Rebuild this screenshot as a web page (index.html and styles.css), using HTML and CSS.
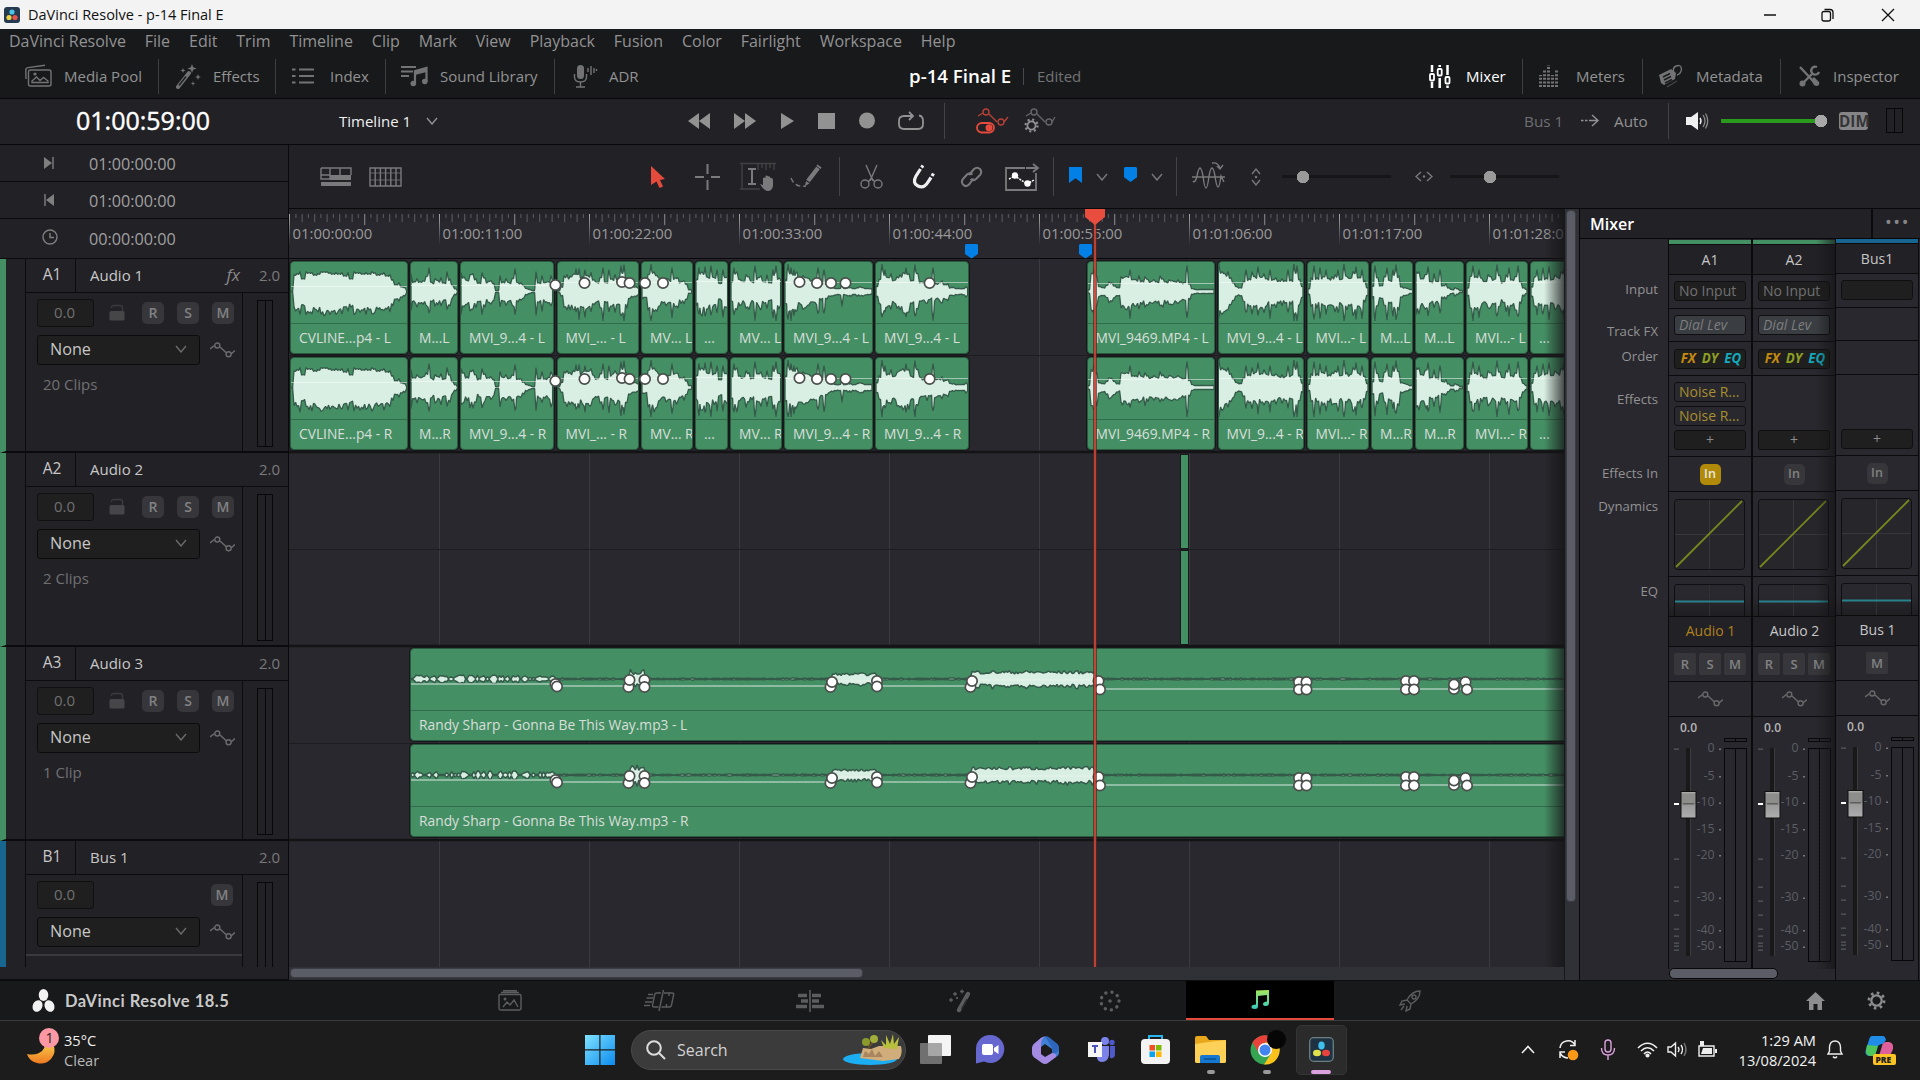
FILE: index.html
```html
<!DOCTYPE html>
<html lang="en">
<head>
    <meta charset="UTF-8">
    <meta name="viewport" content="width=device-width, initial-scale=1.0">
    <title>DaVinci Resolve - p-14 Final E</title>
    <link rel="stylesheet" href="styles.css">
</head>
<body>
    <svg class="defs">
        <symbol id="curve" viewBox="0 0 25 16">
            <path d="M0 7L4.500 3.500M10 5L16.500 11M21 12L25 8.500" class="line"/>
            <circle cx="7.300" cy="3.500" r="2.500" class="line"/><circle cx="18.600" cy="12.300" r="2.500" class="line"/>
        </symbol>
        <symbol id="chev" viewBox="0 0 12 8"><path d="M1 1L6 7L11 1" class="line"/></symbol>
        <symbol id="lock" viewBox="0 0 16 17"><path d="M2.500 4V3.500Q2.500 1.500 5 1.500H11Q13.500 1.500 13.500 4V7" class="line" opacity=".7"/><rect x="0.500" y="7" width="15" height="9.500" rx="1.500" fill="currentColor"/></symbol>
        <symbol id="gear" viewBox="0 0 22 22"><circle cx="11" cy="11" r="6" fill="none" stroke="currentColor" stroke-width="2.600"/><circle cx="11" cy="11" r="8.800" fill="none" stroke="currentColor" stroke-width="3.200" stroke-dasharray="3 3.910"/></symbol>
    </svg>

    <!-- window title -->
    <div class="titlebar">
        <svg width="16" height="16" viewBox="0 0 16 16"><rect width="16" height="16" rx="3" fill="#253a4e"/><circle cx="8" cy="5" r="2.600" fill="#48c3ea"/><circle cx="5" cy="10.500" r="2.600" fill="#e8d245"/><circle cx="11" cy="10.500" r="2.600" fill="#e8504b"/></svg>
        <span>DaVinci Resolve - p-14 Final E</span>
        <svg class="win-btns" width="132" height="16" viewBox="0 0 132 16" fill="none" stroke="#111" stroke-width="1.300"><path d="M1 8H13M119 2L131 14M131 2L119 14"/><rect x="59" y="4.500" width="8.500" height="9.500" rx="2"/><path d="M61.500 2.500H67Q70 2.500 70 5.500V12"/></svg>
    </div>

    <div class="menubar">
        <span>DaVinci Resolve</span><span>File</span><span>Edit</span><span>Trim</span><span>Timeline</span><span>Clip</span><span>Mark</span><span>View</span><span>Playback</span><span>Fusion</span><span>Color</span><span>Fairlight</span><span>Workspace</span><span>Help</span>
    </div>

    <div class="panelbar">
        <div class="pbtn media"><svg width="27" height="24" viewBox="0 0 27 24"><path d="M1 15L0.800 6Q0.700 4 3 3.600L20 1.200M5.500 6H24Q26 6 26 8V20Q26 22 24 22H5.500Q3.500 22 3.500 20V8Q3.500 6 5.500 6ZM7 18.500V17L11.500 13L15 16.500L18.500 13.500L23 17V18.500Z" class="line"/><circle cx="10" cy="10" r="1.600" fill="currentColor"/></svg>Media Pool</div>
        <div class="pbtn effects"><svg width="25" height="25" viewBox="0 0 25 25"><path d="M2 23L13 9" stroke="currentColor" stroke-width="4" stroke-linecap="round"/><path d="M3 21.500L10 12.500" stroke="#222" stroke-width="1.500"/><path d="M16 0L17.200 3.300L20.500 4.500L17.200 5.700L16 9L14.800 5.700L11.500 4.500L14.800 3.300ZM22 10L22.800 12.200L25 13L22.800 13.800L22 16L21.200 13.800L19 13L21.200 12.200ZM7 4L7.700 5.800L9.500 6.500L7.700 7.200L7 9L6.300 7.200L4.500 6.500L6.300 5.800ZM17 17L17.600 18.900L19.500 19.500L17.600 20.100L17 22L16.400 20.100L14.500 19.500L16.400 18.900Z" fill="currentColor"/></svg>Effects</div>
        <div class="pbtn index"><svg width="22" height="18" viewBox="0 0 22 18"><path d="M0 2.500H3.500M0 9H3.500M0 15.500H3.500M7 2.500H22M7 9H22M7 15.500H22" stroke="currentColor" stroke-width="2.200"/></svg>Index</div>
        <div class="pbtn sound"><svg width="27" height="22" viewBox="0 0 27 22"><path d="M0 2H15M0 6.500H12M0 11H8" stroke="currentColor" stroke-width="2"/><path d="M14 18V6L25.500 3V16" fill="none" stroke="currentColor" stroke-width="2.200"/><path d="M14 6L25.500 3V7L14 10Z" fill="currentColor"/><circle cx="12.300" cy="18.500" r="2.800" fill="currentColor"/><circle cx="23.800" cy="16.500" r="2.800" fill="currentColor"/></svg>Sound Library</div>
        <div class="pbtn adr"><svg width="24" height="23" viewBox="0 0 24 23"><rect x="4" y="0" width="7" height="14" rx="3.500" fill="currentColor"/><path d="M1.500 9V12Q1.500 17 7.500 17Q13.500 17 13.500 12V9M7.500 17V22M3 22H12M15 3V7M18 1V10M21 3V8M23.500 4V6" class="line"/></svg>ADR</div>
        <div class="project"><b>p-14 Final E</b><i></i><span>Edited</span></div>
        <div class="pbtn mixer on"><svg width="22" height="23" viewBox="0 0 22 23"><g fill="none" stroke="currentColor" stroke-width="1.800"><rect x="1" y="9" width="4" height="6.500" rx="1"/><rect x="8.700" y="4" width="4" height="6.500" rx="1"/><rect x="16.500" y="12" width="4" height="6.500" rx="1"/></g><path d="M3 0V7M3 17V23M10.700 0V2M10.700 13V23M18.500 0V10M18.500 20.500V23" stroke="currentColor" stroke-width="2.500"/></svg>Mixer</div>
        <div class="pbtn meters"><svg width="20" height="22" viewBox="0 0 20 22"><path d="M1.500 22V10M5.500 22V4M9.500 22V0M13.500 22V10M17.500 22V4" stroke="currentColor" stroke-width="3" stroke-dasharray="2 1.600"/></svg>Meters</div>
        <div class="pbtn metadata"><svg width="24" height="24" viewBox="0 0 24 24"><path d="M1 11L13 5L18 9L17 15L6 21L3 19Z" fill="currentColor"/><path d="M5 13L12 9.500M6 16L13 12.500M7 19L14 15.500" stroke="#1b1c1d" stroke-width="1.500"/><path d="M16 9Q14 4 18 2Q23 0 23.500 5Q23 10 19 11" class="line"/><path d="M9 23L19 17" class="line" opacity=".5"/></svg>Metadata</div>
        <div class="pbtn inspector"><svg width="21" height="22" viewBox="0 0 21 22"><path d="M1 2L15 17M3 19L14 8" stroke="currentColor" stroke-width="2.400"/><path d="M12 15L15 12L20 17Q21 20 18 21Q16 21 15 20Z" fill="currentColor"/><circle cx="3.500" cy="18.500" r="3" fill="currentColor"/><path d="M18 2A4 4 0 1 0 20 7" fill="none" stroke="currentColor" stroke-width="2.400"/></svg>Inspector</div>
    </div>

    <div class="transport">
        <span class="timecode">01:00:59:00</span>
        <span class="white">Timeline 1</span>
        <svg width="12" height="8"><use href="#chev"/></svg>
        <svg width="23" height="16" viewBox="0 0 23 16"><path d="M11 0V16L0 8ZM22 0V16L11 8Z" fill="currentColor"/></svg>
        <svg width="23" height="16" viewBox="0 0 23 16"><path d="M1 0V16L12 8ZM12 0V16L23 8Z" fill="currentColor"/></svg>
        <svg width="13" height="16" viewBox="0 0 13 16"><path d="M0 0V16L13 8Z" fill="currentColor"/></svg>
        <svg width="17" height="16"><rect width="17" height="16" fill="currentColor"/></svg>
        <svg width="17" height="17"><circle cx="8" cy="8.500" r="8" fill="currentColor"/></svg>
        <svg width="26" height="20" viewBox="0 0 26 20"><path d="M8 5H6Q1 5 1 10V13Q1 18 6 18H20Q25 18 25 13V10Q25 5 21 4.500M7 5H14M11 1L15 5L11 9" fill="none" stroke="currentColor" stroke-width="1.800"/></svg>
        <i class="sep"></i>
        <svg class="red" width="32" height="26" viewBox="0 0 32 26"><g opacity=".75"><path d="M2 8L7 5M13 6L21 14M28 14L32 9" class="line"/><circle cx="10" cy="4" r="3" class="line"/><circle cx="25" cy="14" r="3" class="line"/></g><rect x="1" y="15" width="17" height="9.500" rx="4.700" fill="none" stroke="currentColor" stroke-width="1.800"/><circle cx="13" cy="19.700" r="3.500" fill="currentColor"/></svg>
        <svg width="32" height="26" viewBox="0 0 32 26"><g opacity=".6"><path d="M2 8L7 5M13 6L21 14M28 14L31 9" class="line"/><circle cx="10" cy="4" r="3" class="line"/><circle cx="25" cy="14" r="3" class="line"/></g><svg x="0" y="10" width="15" height="15"><use href="#gear"/></svg></svg>
        <span class="dim-text">Bus 1</span>
        <svg width="18" height="13" viewBox="0 0 18 13"><path d="M0 6.500H2.500M4 6.500H6.500M8 6.500H16M11 1L17 6.500L11 12" class="line"/></svg>
        <span>Auto</span>
        <i class="sep"></i>
        <svg class="white" width="23" height="18" viewBox="0 0 23 18"><path d="M0 5H5L12 0V18L5 13H0Z" fill="currentColor"/><path d="M14 6Q16 9 14 12" class="line"/><path d="M17 3Q21 9 17 15M19.500 1.500Q24 9 19.500 16.500" stroke="#8a8a8a" fill="none" stroke-width="1.300"/></svg>
        <div class="volume"></div>
        <span class="dim">DIM</span>
        <i class="mini-meter"></i>
    </div>

    <div class="main">
        <div class="left">
            <div class="tc"><svg width="10" height="12" viewBox="0 0 10 12"><path d="M0 0L8 6L0 12Z" fill="currentColor"/><path d="M9 0V12" class="line"/></svg>01:00:00:00</div>
            <div class="tc"><svg width="10" height="12" viewBox="0 0 10 12"><path d="M10 0L2 6L10 12Z" fill="currentColor"/><path d="M1 0V12" class="line"/></svg>01:00:00:00</div>
            <div class="tc"><svg width="16" height="16" viewBox="0 0 16 16"><circle cx="8" cy="8" r="7" class="line"/><path d="M8 4V8.500H12" class="line"/></svg>00:00:00:00</div>
            <div class="heads" id="heads"></div>
        </div>

        <div class="right">
            <div class="tools">
                <svg width="32" height="20" viewBox="0 0 32 20"><path d="M1 1H31V8M1 1V12H10V1M20 1V8M1 8H10" class="line"/><path d="M10 8H31V13H10ZM1 15H31V19H1Z" fill="currentColor"/></svg>
                <svg width="33" height="20" viewBox="0 0 33 20"><path d="M1 1H32V19H1ZM6.200 1V19M11.400 1V19M16.600 1V19M21.800 1V19M27 1V19" class="line"/><path d="M1 6H32M1 13H32" class="line" opacity=".5"/></svg>
                <svg class="red" width="14" height="22" viewBox="0 0 14 22"><path d="M0 0L14 13L9 14L12 20.500L8.500 22L5.500 15.500L0 19Z" fill="currentColor"/></svg>
                <svg width="25" height="26" viewBox="0 0 25 26"><path d="M12.500 0V10M12.500 16V26M0 13H9M16 13H25" stroke="currentColor" stroke-width="2"/></svg>
                <svg width="36" height="30" viewBox="0 0 36 30"><g opacity=".35"><path d="M0 1.500H36M2 1V27M0 27H20M18 2V8M22 2V6M26 2V8M30 2V6M34 2V8" class="line"/></g><path d="M8 7H16M12 7V22M8 22H16" stroke="currentColor" stroke-width="2"/><path d="M20 22L23 23V16Q24.500 15 25.500 16V14Q27 13 28 14.500Q30 13.500 30.500 16Q33 15.500 33 18V24Q32 29 28 29Q24 29 20 22Z" fill="currentColor"/></svg>
                <svg width="31" height="26" viewBox="0 0 31 26"><path d="M0 14Q4 24 15 22" class="line" stroke-dasharray="5 3"/><path d="M17 17L27 4" stroke="currentColor" stroke-width="4.500"/><path d="M27.500 3.500L28.500 2" stroke="currentColor" stroke-width="5"/><path d="M14 22L15 17L18.500 19.500Z" fill="currentColor"/></svg>
                <i class="sep tall"></i>
                <svg width="23" height="26" viewBox="0 0 23 26"><path d="M6 1L13 17M17 1L10 17" class="line"/><circle cx="5" cy="20" r="4" class="line"/><circle cx="18" cy="20" r="4" class="line"/><path d="M8 18L11.500 14L15 18" class="line"/></svg>
                <svg class="white" width="23" height="24" viewBox="0 0 23 24"><path d="M8.500 4L4 11Q0 18 6 21Q12 24 16 17L19 12.500" fill="none" stroke="currentColor" stroke-width="3.200"/><path d="M9.500 2.500L11 0.500M20 11L21.500 8.500" stroke="currentColor" stroke-width="3.200"/></svg>
                <svg width="21" height="22" viewBox="0 0 21 22"><path d="M8 9L13 3Q16 0.500 19 3Q21.500 6 19 9L15 13Q12 15.500 9.500 13M12.500 12.500L8 18.500Q5 21.500 2.500 19Q-0.500 16 2 13L6 8.500Q8.500 6 11.500 8.500" fill="none" stroke="currentColor" stroke-width="2"/></svg>
                <svg width="34" height="28" viewBox="0 0 34 28"><path d="M20 5H1V27H31V10M21 5H32M28 1L33 5L28 9" fill="none" stroke="currentColor" stroke-width="1.800"/><path d="M4 16L10 13L22 21L29 17" stroke="#fff" stroke-width="1.500" stroke-dasharray="2 1" fill="none"/><circle cx="10" cy="12.500" r="3.200" fill="#fff"/><circle cx="22.500" cy="20.500" r="3.200" fill="#fff"/></svg>
                <i class="sep tall"></i>
                <svg class="mk" width="13" height="16" viewBox="0 0 14 17"><path d="M0 0H14V17L7 12L0 17Z" fill="#0280e6"/></svg>
                <svg width="12" height="8"><use href="#chev"/></svg>
                <svg class="mk" width="13" height="16" viewBox="0 0 14 17"><path d="M1 0H13L14 1V11L7 16L0 11V1Z" fill="#0280e6"/></svg>
                <svg width="12" height="8"><use href="#chev"/></svg>
                <i class="sep tall"></i>
                <svg width="34" height="30" viewBox="0 0 34 30"><path d="M0 15H33M1 19Q3 22 5 14Q8 -2 11 14Q14 38 17 14Q20 -2 23 14Q26 36 29 14L32 20M20 1Q26 0 28 6M25 4L28 7L31 3" class="line"/></svg>
                <svg width="10" height="18" viewBox="0 0 10 18"><path d="M1 6L5 1L9 6M1 12L5 17L9 12" class="line"/><circle cx="5" cy="9" r="1.200" fill="currentColor"/></svg>
                <div class="slider s1"></div>
                <svg width="18" height="11" viewBox="0 0 18 11"><path d="M6 1L1 5.500L6 10M12 1L17 5.500L12 10" class="line"/><circle cx="9" cy="5.500" r="1.200" fill="currentColor"/></svg>
                <div class="slider s2"></div>
            </div>

            <div class="work">
                <div class="timeline">
                    <div class="canvas" id="timeline">
                        <div class="ruler" id="ruler"></div>
                        <div class="rows" id="rows"></div>
                        <svg class="playhead" width="20" height="758" viewBox="0 0 20 758"><path d="M10 0V758" stroke="#5a2520" stroke-width="4" opacity=".7"/><path d="M10 0V758" stroke="#e04a3b" stroke-width="1.500"/><path d="M0 0H20V8L10 16L0 8Z" fill="#e84d3d"/></svg>
                        <div class="fade"></div>
                    </div>
                    <div class="hscroll"><i></i></div>
                </div>
                <div class="vscroll"><i></i></div>
                <div class="mix">
                    <div class="mix-head"><b>Mixer</b><span>•••</span></div>
                    <div class="mix-body">
                        <div class="labels"><span>Input</span><span>Track FX</span><span>Order</span><span>Effects</span><span>Effects In</span><span>Dynamics</span><span>EQ</span></div>
                        <div class="channels" id="channels"></div>
                    </div>
                </div>
            </div>
        </div>
    </div>

    <div class="pages">
        <svg class="brand-logo" width="23" height="24" viewBox="0 0 23 24" fill="#f2f2f2"><ellipse cx="11.500" cy="6" rx="4.800" ry="6"/><ellipse cx="5.500" cy="17" rx="4.800" ry="6" transform="rotate(25 5.500 17)"/><ellipse cx="17.500" cy="17" rx="4.800" ry="6" transform="rotate(-25 17.500 17)"/></svg>
        <b class="brand">DaVinci Resolve 18.5</b>
        <div class="page"><svg width="24" height="21" viewBox="0 0 24 21"><path d="M2 4.500H22Q23 4.500 23 6V18Q23 20 21 20H3Q1 20 1 18V6Q1 4.500 2 4.500ZM3 2.500H21M5 0.700H19M5 17L9 12L12 15L16 10L20 17" class="line"/><circle cx="7" cy="9" r="1.500" fill="currentColor"/></svg></div>
        <div class="page"><svg width="31" height="21" viewBox="0 0 31 21"><path d="M17 3H12.500Q11 3 10.700 4.500L8.500 15Q8.300 17 10 17H14.500M20 3H28Q30 3 29.700 4.500L27.500 15Q27 17 25.500 17H17.500M19.500 0L15 21M4 4.500H9M2.500 8H9M1 12H8M0 15.500H6M25 3.500V6M22.500 14V17" class="line"/></svg></div>
        <div class="page"><svg width="28" height="22" viewBox="0 0 28 22"><path d="M2 5.500H11M5 11H12M0 16.500H11M16 5.500H25M16 11H23M16 16.500H28" stroke="currentColor" stroke-width="3.400"/><path d="M14 0V22" stroke="currentColor" stroke-width="1.600"/></svg></div>
        <div class="page"><svg width="23" height="23" viewBox="0 0 23 23"><path d="M11 21L20 5" stroke="currentColor" stroke-width="4.400" stroke-linecap="round"/><path d="M13.500 20L19 10" stroke="#2a2b2d" stroke-width="1.300"/><path d="M12 2.500H16M14 0.500V4.500M1 11H5M3 9V13M5 5H9M7 3V7M8 9H10M9 8V10" class="line"/></svg></div>
        <div class="page"><svg width="22" height="22" viewBox="0 0 22 22"><circle cx="11" cy="11" r="9" fill="none" stroke="currentColor" stroke-width="3.400" stroke-linecap="round" stroke-dasharray="0.100 6.200"/><circle cx="11" cy="11" r="1.800" fill="currentColor"/></svg></div>
        <div class="page active"><svg width="18" height="19" viewBox="0 0 18 19"><defs><linearGradient id="g-note" x1="0" y1="0" x2="0" y2="1"><stop offset="0" stop-color="#a5e85c"/><stop offset="1" stop-color="#35c9c0"/></linearGradient></defs><path d="M5 0.500L18 0V13Q18 16 15 16Q12 16 12 14Q12 12 16 11.500V5L7 6V16Q7 19 4 19Q0 19 0.500 16.500Q1 14.500 5 14.500Z" fill="url(#g-note)"/></svg></div>
        <div class="page"><svg width="22" height="22" viewBox="0 0 22 22"><path d="M21 1Q13 1 8 10L12 14Q21 9 21 1ZM8 10L3 11L1 15L6 14M12 14L11 19L7 21L8 16M5 16L2 20" class="line"/><circle cx="15" cy="7" r="2" class="line"/></svg></div>
        <svg class="home" width="19" height="18" viewBox="0 0 19 18"><path d="M9.500 0L19 9H16V18H11.500V12H7.500V18H3V9H0Z" fill="currentColor"/></svg>
        <svg width="19" height="19"><use href="#gear"/></svg>
    </div>

    <div class="taskbar">
        <svg width="34" height="36" viewBox="0 0 34 36"><defs><linearGradient id="g-moon" x1="0" y1="0" x2="0" y2="1"><stop offset="0" stop-color="#f7c84a"/><stop offset="1" stop-color="#ee7a21"/></linearGradient></defs><path d="M27 12Q31 20 25 27Q19 33 11 31Q3 29 1 22Q10 24 16 19Q19 16 19 12Z" fill="url(#g-moon)"/><circle cx="23" cy="6" r="10" fill="#fb98a4"/><text x="19.500" y="11" class="badge">1</text></svg>
        <div class="weather"><span>35°C</span><span class="sub">Clear</span></div>
        <svg width="30" height="30" viewBox="0 0 30 30"><defs><linearGradient id="g-win" x1="0" y1="0" x2="1" y2="1"><stop offset="0" stop-color="#7fe3ff"/><stop offset="1" stop-color="#0c8bef"/></linearGradient></defs><path d="M0 0H14.300V14.300H0ZM15.500 0H30V14.300H15.500ZM0 15.500H14.300V30H0ZM15.500 15.500H30V30H15.500Z" fill="url(#g-win)"/></svg>
        <div class="search">
            <svg width="20" height="20" viewBox="0 0 20 20" fill="none" stroke="#ddd" stroke-width="2"><circle cx="8" cy="8" r="6.800"/><path d="M13 13L19 19"/></svg>Search
            <svg class="scene" width="60" height="32" viewBox="0 0 60 32"><ellipse cx="27" cy="25" rx="27" ry="6" fill="#1caef2"/><path d="M17 24L20 14L28 15L36 12L58 12Q60 20 56 25L40 27Z" fill="#d2ad7c"/><path d="M20 23L22 17L26 20L29 15L32 22L36 17L40 23Z" fill="#a98560"/><path d="M26 15V8M27 12L31 7" stroke="#6b4f2b" stroke-width="1.600"/><circle cx="23" cy="8" r="4" fill="#8a9a2c"/><circle cx="31" cy="5" r="4" fill="#a3ae3a"/><path d="M41 14L38 6L43 11V1L47 10L50 0L51 10L56 3L54 15Z" fill="#b8bf3c"/></svg>
        </div>
        <svg width="31" height="29" viewBox="0 0 31 29"><rect x="8" y="0" width="23" height="21" rx="1" fill="#f4f4f4"/><rect x="0" y="8" width="22" height="21" rx="1" fill="#8c8c8c" opacity=".75"/></svg>
        <svg width="28" height="29" viewBox="0 0 28 29"><path d="M14 0A14 14 0 1 1 8 26.500L0 28.500V14A14 14 0 0 1 14 0Z" fill="#6668cf"/><rect x="6" y="9" width="11" height="11" rx="2" fill="#fff"/><path d="M18 13L22.500 10V19L18 16Z" fill="#fff"/></svg>
        <svg width="27" height="28" viewBox="0 0 27 28"><path d="M9 2Q13 -1 17 2L24 7Q27 9 27 13V16Q27 20 24 21L20 23V13L13 8L9 11V20L2 21Q0 19 0 16V12Q0 9 3 7Z" fill="#3f7fd4"/><path d="M13 0Q9 3 9 9V18L13 21L20 17Q25 17 24 21L16 27Q13 29 10 27L3 22Q0 20 0 16V12Q0 9 3 7L9 2Z" fill="#a58ae4"/><path d="M13 0Q16 0 18 2L24 7Q27 9 27 13Q26 18 20 17V12Z" fill="#2f66bd"/></svg>
        <svg width="27" height="26" viewBox="0 0 27 26"><circle cx="17" cy="4" r="4" fill="#7b83eb"/><circle cx="24" cy="5.500" r="2.700" fill="#5059c9"/><path d="M9 9H21V18Q20 25 14 25Q10 25 9 21Z" fill="#7b83eb"/><path d="M22 9H27V18Q26 22 22 21Z" fill="#5059c9"/><rect x="0" y="5" width="14" height="15" fill="#f5f5f5"/><path d="M4 9H10M7 9V16" stroke="#4b53bc" stroke-width="2"/></svg>
        <svg width="29" height="31" viewBox="0 0 29 31"><path d="M8 7V2H21V7" fill="none" stroke="#2ab4ee" stroke-width="2"/><rect x="0" y="5" width="29" height="25" rx="4" fill="#f3f3f3"/><rect x="8.500" y="11" width="5.500" height="5.500" fill="#ef5022"/><rect x="15" y="11" width="5.500" height="5.500" fill="#7eb903"/><rect x="8.500" y="17.500" width="5.500" height="5.500" fill="#0aa2ec"/><rect x="15" y="17.500" width="5.500" height="5.500" fill="#fdb806"/></svg>
        <div class="app"><svg width="31" height="27" viewBox="0 0 31 27"><path d="M0 2Q0 0 2 0H11L14 4H29Q31 4 31 6V25Q31 27 29 27H2Q0 27 0 25Z" fill="#e9a81c"/><path d="M0 8L14 6L31 4V25Q31 27 29 27H2Q0 27 0 25Z" fill="#fdd158"/><path d="M5 27V21Q5 19 7 19H23Q25 19 25 21V27Z" fill="#1577cf"/><path d="M9 23H21" stroke="#0b4f92" stroke-width="1.500"/></svg><i></i></div>
        <div class="app"><svg class="chrome" width="36" height="34" viewBox="0 0 36 34"><circle cx="15" cy="19" r="14.500" fill="#35a553"/><path d="M2.500 11.500A14.500 14.500 0 0 1 27.500 11.500H15L9 22Z" fill="#e8433a"/><path d="M27.500 11.500A14.500 14.500 0 0 1 14 33.500L21.500 22L15 11.500Z" fill="#fbc21d"/><circle cx="15" cy="19" r="7" fill="#fff"/><circle cx="15" cy="19" r="5.500" fill="#4384ee"/><circle cx="26.500" cy="8.500" r="9.500" fill="#060606"/></svg><i></i></div>
        <div class="app tile"><svg width="25" height="25" viewBox="0 0 25 25"><rect x="0.700" y="0.700" width="23.600" height="23.600" rx="4" fill="#1f3243" stroke="#6b7f80" stroke-width="1.300"/><ellipse cx="12.500" cy="8.500" rx="3.200" ry="4" fill="#3fc0ec"/><ellipse cx="8" cy="16" rx="4" ry="3.300" fill="#dfe14a"/><ellipse cx="17" cy="16" rx="4" ry="3.300" fill="#e8423f"/></svg><i></i></div>
        <svg width="14" height="9" viewBox="0 0 14 9"><path d="M1 8L7 1.500L13 8" fill="none" stroke="#eee" stroke-width="1.600"/></svg>
        <svg width="21" height="22" viewBox="0 0 21 22"><path d="M2 9A8 8 0 0 1 17 6M17 1V6.500H12M2 19V13H7M2 14Q5 19 10 19" fill="none" stroke="#eee" stroke-width="1.500"/><circle cx="15" cy="16" r="5.300" fill="#fb9818"/></svg>
        <svg width="16" height="21" viewBox="0 0 16 21"><rect x="5" y="1" width="6" height="12" rx="3" fill="none" stroke="#dba1df" stroke-width="1.400"/><path d="M1.500 9Q1.500 16 8 16Q14.500 16 14.500 9M8 16V21" fill="none" stroke="#dba1df" stroke-width="1.400"/></svg>
        <svg width="21" height="16" viewBox="0 0 21 16" fill="none" stroke="#eee" stroke-width="1.600"><path d="M1 6Q10.500 -3.500 20 6M4 9Q10.500 2.500 17 9M7 12Q10.500 8 14 12"/><circle cx="10.500" cy="13.500" r="1.300" fill="#eee"/></svg>
        <svg width="21" height="17" viewBox="0 0 21 17" fill="none" stroke="#eee" stroke-width="1.400"><path d="M1 6H4L8.500 2V15L4 11H1ZM11 6Q13 8.500 11 11M14 4Q17 8.500 14 13"/><path d="M17 2Q21 8.500 17 15" stroke="#777"/></svg>
        <svg width="19" height="17" viewBox="0 0 19 17"><path d="M1 5H16V15H1Z" fill="none" stroke="#eee" stroke-width="1.400"/><path d="M5 7H14V13H3ZM17 8H19V12H17ZM2 0H6V5H2Z" fill="#eee"/></svg>
        <div class="clock"><span>1:29 AM</span><span>13/08/2024</span></div>
        <svg width="16" height="19" viewBox="0 0 16 19"><path d="M1 14H15L13.500 11V7Q13 1 8 1Q3 1 2.500 7V11ZM6 16.500Q8 19 10 16.500" fill="none" stroke="#eee" stroke-width="1.400"/></svg>
        <svg width="31" height="30" viewBox="0 0 31 30"><path d="M7 1H18Q20 1 21 5L18 9Q13 9 12 13L10 20Q9 21 4 21Q-1 20 1 14L4 5Q5 1 7 1Z" fill="#1f8ce8"/><path d="M2 10L1 16Q1 21 6 21H10L13 11Z" fill="#4fc55b"/><path d="M21 7H24Q29 8 28 14L25 21H14L17 11Q18 7 21 7Z" fill="#e0609c"/><rect x="8" y="19" width="23" height="11" rx="2" fill="#fcc324"/><text x="10.500" y="28" class="pre">PRE</text></svg>
    </div>

    <script src="script.js"></script>
</body>
</html>
```
FILE: styles.css
```css
* {
    box-sizing: border-box;
}
body {
    margin: 0;
    width: 1920px;
    height: 1080px;
    overflow: hidden;
    display: flex;
    flex-direction: column;
    font-family: "Open Sans", "Noto Sans", sans-serif;
    font-size: 15px;
    color: #929293;
    background: #18191b;
}
svg {
    display: block;
    flex: none;
    overflow: visible;
}
.defs {
    position: absolute;
    width: 0;
    height: 0;
}
.line {
    fill: none;
    stroke: currentColor;
    stroke-width: 1.4;
}
.white {
    color: #f0f0f0;
}
.red {
    color: #e54b3c;
}

/* title + menu */
.titlebar {
    height: 29px;
    background: #f3f3f3;
    color: #111;
    display: flex;
    align-items: center;
    padding: 0 19px 0 4px;
    gap: 8px;
    font-size: 14.5px;
}
.win-btns {
    margin-left: auto;
    margin-right: 6px;
}
.menubar {
    height: 25px;
    display: flex;
    align-items: center;
    gap: 18.9px;
    padding: 0 0 2px 9px;
    font-size: 16px;
}
.panelbar {
    height: 45px;
    display: flex;
    border-bottom: 1px solid #08080a;
}
.pbtn {
    display: flex;
    align-items: center;
    position: relative;
    white-space: nowrap;
}
.pbtn::after {
    content: "";
    position: absolute;
    right: 0;
    top: 5px;
    height: 35px;
    width: 1px;
    background: #3e3f41;
}
.pbtn svg {
    opacity: .75;
}
.pbtn.on {
    color: #fff;
}
.pbtn.on svg {
    opacity: 1;
}
.adr::after, .inspector::after {
    display: none;
}
.media { width: 159px; padding-left: 25px; gap: 12px; }
.effects { width: 117px; padding-left: 17px; gap: 12px; }
.index { width: 110px; padding-left: 16px; gap: 16px; }
.sound { width: 169px; padding-left: 15px; gap: 12px; }
.adr { width: 354px; padding-left: 18px; gap: 12px; }
.mixer { width: 94px; padding-left: 0; gap: 15px; }
.meters { width: 120px; padding-left: 16px; gap: 17px; }
.metadata { width: 138px; padding-left: 15px; gap: 14px; }
.inspector { padding-left: 18px; gap: 13px; }
.project {
    width: 520px;
    display: flex;
    align-items: center;
}
.project b {
    width: 114px;
    color: #fff;
    font-weight: 600;
    font-size: 18.7px;
    padding-bottom: 1px;
    white-space: nowrap;
}
.project i {
    width: 1px;
    height: 17px;
    background: #47484a;
    margin-right: 13px;
}
.project span {
    color: #727274;
}

/* transport */
.transport {
    height: 46px;
    display: grid;
    grid-template-columns: 262px 87px 262px 45px 48px 37px 41px 39px 46px 32px 48px 500px 57px 33px 54px 18px 35px 118px 47px 20px;
    align-items: center;
    padding: 0 0 2px 77px;
    background: #222126;
    border-bottom: 1px solid #09090a;
    white-space: nowrap;
}
.timecode {
    color: #fff;
    font-size: 25px;
    font-weight: 500;
    -webkit-text-stroke: .4px #fff;
    margin: -2px 0 0 -1px;
}
.sep {
    width: 1px;
    height: 36px;
    background: #444448;
}
.sep.tall {
    height: 39px;
}
.dim-text {
    color: #6f6f72;
}
.transport span:nth-of-type(n+3) {
    font-size: 15.3px;
}
.volume {
    width: 106px;
    height: 12px;
    background: radial-gradient(circle at 100px 6px, #a8a8a8 6px, transparent 6.5px), linear-gradient(#2a9a1c, #2a9a1c) 0 4px / 100px 4px no-repeat;
}
.transport .dim {
    width: 29px;
    height: 18px;
    line-height: 18px;
    border-radius: 3px;
    background: #858587;
    color: #343437;
    font-size: 13px;
    font-weight: 700;
    text-align: center;
}
.mini-meter {
    width: 17px;
    height: 25px;
    border: 1px solid #060607;
    background: linear-gradient(#060607, #060607) 7px 0 / 1px 100% no-repeat;
}

/* left side */
.main {
    height: 836px;
    display: flex;
    background: #222126;
    border-bottom: 2px solid #0d0d0f;
}
.left {
    width: 289px;
    border-right: 1px solid #0a0a0c;
    overflow: hidden;
}
.tc {
    height: 37px;
    border-bottom: 1px solid #0c0c0e;
    display: flex;
    align-items: center;
    padding: 2px 0 0 44px;
    gap: 35px;
    color: #a0a0a0;
    font-size: 16.2px;
}
.tc svg {
    color: #7f7f80;
    margin-top: -3px;
}
.tc:nth-child(3) {
    height: 40px;
    padding: 0 0 0 42px;
    gap: 31px;
}
.heads {
    height: 708px;
    overflow: hidden;
}
.head {
    height: 194px;
    display: flex;
    border-bottom: 2px solid #0b0b0d;
    border-left: 6px solid #458f64;
}
.head.bus {
    border-left-color: #186690;
    height: 200px;
}
.head-in {
    flex: 1;
    margin-left: 19px;
    border-left: 1px solid #0c0c0e;
}
.head-top {
    height: 34px;
    border-bottom: 1px solid #0c0c0e;
    display: flex;
    align-items: center;
    padding: 0 8px 2px 0;
    color: #c8c8c8;
}
.head-top .no {
    width: 50px;
    height: 33px;
    line-height: 31px;
    margin-bottom: -2px;
    border-right: 1px solid #0c0c0e;
    text-align: center;
    padding-left: 3px;
    font-size: 15.5px;
}
.head-top .nm {
    flex: 1;
    padding-left: 14px;
}
.head-top .fx {
    font-style: italic;
    color: #88888a;
    margin-right: 19px;
    font-size: 17px;
    line-height: 20px;
}
.head-top .fmt {
    color: #7a7a7c;
}
.head-body {
    height: 158px;
    display: flex;
}
.bus .head-body {
    height: 164px;
}
.head-ctl {
    width: 217px;
    border-right: 1px solid #0c0c0e;
    padding: 5px 0 0 11px;
}
.ctl-row {
    display: flex;
    align-items: center;
    height: 29px;
}
.ctl-row svg {
    color: #464649;
}
.vol {
    width: 57px;
    height: 28px;
    line-height: 24px;
    text-align: center;
    background: #1f1f1f;
    border: 1px solid #101011;
    border-radius: 3px;
    color: #707072;
    margin-right: 15px;
    padding-right: 2px;
}
.btn {
    width: 22px;
    height: 22px;
    line-height: 22px;
    border-radius: 5px;
    background: #37373b;
    color: #818183;
    text-align: center;
    font-size: 14px;
    font-weight: 600;
    margin-left: 13px;
}
.ctl-row .lock {
    margin-right: 4px;
}
.bus .btn {
    margin-left: 102px;
}
.select {
    width: 163px;
    height: 30px;
    margin-right: 10px;
    padding: 0 12px 1px 12px;
    display: flex;
    align-items: center;
    justify-content: space-between;
    background: #1f1f1f;
    border: 1px solid #0b0b0c;
    border-radius: 3px;
    color: #c6c6c6;
    font-size: 16.2px;
}
.ctl-row.second {
    margin-top: 8px;
}
.select svg, .second > svg {
    color: #6b6b6e;
}
.count {
    margin: 10px 0 0 6px;
    color: #717174;
}
.bus .count {
    margin: 8px 0 0 -11px;
    height: 2px;
    background: #3a3a3e;
}
.strip-meter {
    width: 16px;
    height: 147px;
    margin: 7px 0 0 14px;
    border: 1px solid #08080a;
    background: linear-gradient(#08080a, #08080a) 7px 0 / 1px 100% no-repeat;
}

/* tool row */
.right {
    flex: 1;
    min-width: 0;
}
.tools {
    height: 64px;
    display: grid;
    grid-template-columns: 49px 282px 44px 45px 51px 48px 21px 52px 49px 44px 48px 17px 26px 29px 26px 25px 16px 59px 31px 133px 35px 110px;
    align-items: center;
    padding-left: 31px;
    color: #7a7a7c;
    border-bottom: 1px solid #09090b;
}
.tools .mk {
    margin: -3px 0 0 -1px;
}
.slider {
    width: 109px;
    height: 12px;
}
.s1 {
    background: radial-gradient(circle at 21px 6px, #9a9a9a 6px, transparent 6.500px), linear-gradient(#161618, #161618) 0 4px / 100% 3px no-repeat;
}
.s2 {
    background: radial-gradient(circle at 40px 6px, #9a9a9a 6px, transparent 6.500px), linear-gradient(#161618, #161618) 0 4px / 100% 3px no-repeat;
}

/* timeline */
.work {
    display: flex;
    height: 771px;
}
.timeline {
    width: 1275px;
    background: #303137;
}
.canvas {
    height: 758px;
    position: relative;
    overflow: hidden;
    background: #29282e;
}
.ruler {
    height: 50px;
    background: linear-gradient(#222126, #29282e 14px);
    border-bottom: 1px solid #08080a;
    position: relative;
}
.ruler svg {
    position: absolute;
    left: 0;
    top: 0;
}
.ruler text {
    font-size: 14.9px;
    fill: #999;
}
.rows {
    position: relative;
    height: 708px;
}
.rows > svg {
    position: absolute;
    left: 0;
    top: 0;
}
.clip {
    position: absolute;
    height: 93px;
    overflow: hidden;
    background: #458f64;
    border: 1px solid #2b5a41;
    border-radius: 4px;
    box-shadow: 0 0 0 1px #17181a;
    color: #d8dfda;
    font-size: 13.8px;
}
.clip svg {
    position: absolute;
    left: -1px;
    top: -1px;
}
.clip span {
    position: absolute;
    left: 8px;
    top: 66px;
    line-height: 20px;
    white-space: nowrap;
}
.clip.bare {
    border-radius: 0;
    border: 0;
}
.playhead {
    position: absolute;
    left: 795.5px;
    top: 0;
}
.fade {
    position: absolute;
    right: 0;
    top: 0;
    width: 20px;
    height: 100%;
    background: linear-gradient(to right, rgba(20, 20, 22, 0), rgba(20, 20, 22, .75));
}
.hscroll {
    height: 13px;
    padding: 1px 0 0 1px;
}
.hscroll i {
    display: block;
    width: 573px;
    height: 10px;
    border-radius: 4px;
    background: #5a5d65;
    border: 1px solid #3b3d43;
}
.vscroll {
    width: 16px;
    background: #303137;
    border-right: 1px solid #08080a;
    border-left: 1px solid #18181b;
    padding: 1px;
}
.vscroll i {
    display: block;
    width: 10px;
    height: 692px;
    border-radius: 4px;
    background: #5a5d65;
    border: 1px solid #3b3d43;
}

/* mixer */
.mix {
    flex: 1;
    background: #29282e;
    overflow: hidden;
}
.mix-head {
    height: 30px;
    background: #222126;
    border-bottom: 1px solid #08080a;
    display: flex;
    align-items: center;
    padding-left: 10px;
    color: #fff;
    font-size: 16px;
}
.mix-head b {
    flex: 1;
    font-weight: 600;
}
.mix-head span {
    width: 49px;
    height: 29px;
    line-height: 26px;
    text-align: center;
    border-left: 2px solid #0b0b0d;
    color: #858587;
    font-size: 18px;
    letter-spacing: 1.5px;
    padding-left: 2px;
}
.mix-body {
    display: flex;
    height: 741px;
}
.labels {
    width: 88px;
    padding: 40px 10px 0 0;
    display: grid;
    grid-template-rows: 42px 25px 43px 74px 33px 85px 20px;
    align-content: start;
    text-align: right;
    line-height: 20px;
    font-size: 13.2px;
}
.channels {
    flex: 1;
    display: flex;
    background: #29282e;
}
.ch {
    width: 84px;
    flex: none;
    height: 730px;
    padding-top: 1px;
    border-left: 1px solid #0b0b0d;
    border-right: 1px solid #0b0b0d;
    position: relative;
}
.ch.bus {
    margin: -1px 0 0 -1px;
    height: 742px;
}
.ch.shade::after {
    content: "";
    position: absolute;
    right: -1px;
    top: 0;
    width: 20px;
    height: 100%;
    background: linear-gradient(to right, rgba(20, 20, 22, 0), rgba(20, 20, 22, .7));
}
.ch .bar {
    height: 5px;
    background: #458f64;
    border-bottom: 1px solid #0b0b0d;
}
.ch.bus .bar {
    background: #186690;
}
.cell {
    border-bottom: 1px solid #0b0b0d;
    padding: 6px 5px;
}
.cell.name, .cell.foot {
    height: 30px;
    padding: 0;
    line-height: 29px;
    text-align: center;
    color: #c6c6c6;
    background: #222126;
    font-size: 14px;
}
.cell.foot {
    line-height: 28px;
    padding-left: 1px;
}
.cell.foot.sel {
    color: #b0801c;
}
.c-input { height: 34px; }
.c-fx { height: 33px; }
.c-order { height: 34px; padding-top: 7px; }
.c-effects {
    height: 81px;
    display: flex;
    flex-direction: column;
    gap: 4px;
    justify-content: flex-end;
}
.c-in { height: 35px; padding-top: 7px; }
.c-dyn { height: 85px; padding-top: 7px; }
.c-eq {
    height: 40px;
    padding: 7px 5px 0;
    background: linear-gradient(#29282e 50%, #1f1f22);
}
.c-btns, .c-auto {
    height: 35px;
    display: flex;
    justify-content: center;
    align-items: center;
    gap: 3px;
    color: #68686b;
}
.cell .btn {
    margin: 0 auto;
    font-size: 13px;
    width: 21px;
}
.c-btns .btn {
    margin: 0;
    width: 22px;
    border-radius: 2px;
}
.cell .btn.lit {
    background: #b08a08;
    color: #e9e9e0;
}
.cell .btn.in {
    font-size: 12.5px;
    line-height: 20px;
    height: 21px;
}
.box {
    height: 20px;
    line-height: 17px;
    padding: 0 4px;
    border: 1px solid #0f0f10;
    border-radius: 3px;
    background: #1f1f1f;
    color: #717173;
    font-size: 14px;
    white-space: nowrap;
    overflow: hidden;
}
.box.dial {
    background: #3a3d41;
    color: #7c7e80;
    font-style: italic;
}
.box.noise {
    background: #29282e;
    color: #a68f2e;
}
.box.plus {
    text-align: center;
    color: #8b8b8d;
}
.box.order {
    display: flex;
    justify-content: center;
    gap: 6px;
    padding: 0 0 0 2px;
    font-size: 13.3px;
    font-weight: 700;
    font-style: italic;
}
.order .a { color: #c48a10; }
.order .b { color: #8d9f24; }
.order .c { color: #14a9bd; }
.ch text {
    font-size: 12.3px;
    fill: #5b5e65;
    text-anchor: end;
}
.ch text.db {
    font-size: 12px;
    font-weight: 600;
    fill: #b5b5b5;
    text-anchor: start;
}
.mix-scroll {
    position: absolute;
    left: 0;
    top: 729px;
    width: 109px;
    height: 11px;
    border-radius: 5px;
    background: #5a5d65;
    border: 1px solid #08080a;
    z-index: 2;
}

/* page switcher */
.pages {
    height: 39px;
    display: flex;
    align-items: center;
    padding-left: 32px;
    background: #18191b;
    color: #5c5d5f;
}
.brand {
    width: 380px;
    padding-left: 10px;
    font-family: Lato, sans-serif;
    font-size: 16.5px;
    letter-spacing: .5px;
    color: #c9c9c9;
}
.page {
    width: 150px;
    height: 39px;
    display: flex;
    align-items: center;
    justify-content: center;
    padding-right: 1px;
}
.page.active {
    width: 148px;
    margin: 0 1px;
    background: #000;
    border-bottom: 2px solid #e54b3c;
}
.home {
    margin-left: auto;
    margin-right: 42px;
    color: #8d8d8f;
}
.home + svg {
    margin-right: 34px;
    color: #8d8d8f;
}

/* taskbar */
.taskbar {
    height: 60px;
    display: grid;
    grid-template-columns: 38px 521px 46px 289px 56px 56px 56px 53px 54px 56px 45px 225px 37px 42px 37px 30px 31px 31px 98px 38px 40px;
    align-items: center;
    padding: 0 0 2px 26px;
    background: #1c1c1c;
    border-top: 1px solid #3c3c3c;
    color: #f2f2f2;
}
.weather, .clock {
    display: flex;
    flex-direction: column;
    line-height: 20px;
    font-size: 14.6px;
}
.weather .sub {
    color: #b9b9b9;
}
.clock {
    text-align: right;
    width: 87px;
}
.badge {
    font-size: 14px;
    fill: #222;
}
.pre {
    font-size: 8.5px;
    font-weight: 800;
    fill: #222;
}
.search {
    width: 275px;
    height: 40px;
    border-radius: 20px;
    background: #3b3b3b;
    border: 1px solid #4a4a4a;
    display: flex;
    align-items: center;
    gap: 11px;
    padding-left: 14px;
    color: #d2d2d2;
    font-size: 16px;
}
.scene {
    margin-left: auto;
    margin-right: 2px;
}
.app {
    height: 50px;
    display: flex;
    align-items: center;
    position: relative;
}
.app .chrome {
    margin: -3px 0 0 -1px;
}
.app i {
    position: absolute;
    left: 12px;
    bottom: 1px;
    width: 8px;
    height: 4px;
    border-radius: 2px;
    background: #999;
}
.app.tile {
    width: 51px;
    padding-left: 12px;
    background: #2b2b2b;
    border: 1px solid #353535;
    border-radius: 5px;
}
.app.tile i {
    left: 14px;
    bottom: 0;
    width: 20px;
    background: #dba1df;
}
```
FILE: script.js
```js
const MARK_GAP = 150; // px between labelled ruler marks
const X0 = 289;       // left edge of the timeline on screen

// small repeatable random so the waveforms are stable
let seed = 7;
function rnd() {
    seed = (seed * 16807) % 2147483647;
    return seed / 2147483647;
}

/* ---------- ruler ---------- */
const marks = ["01:00:00:00", "01:00:11:00", "01:00:22:00", "01:00:33:00", "01:00:44:00", "01:00:55:00", "01:01:06:00", "01:01:17:00", "01:01:28:00"];
let ruler = '<svg width="1276" height="50"><defs><linearGradient id="g-tick" x1="0" y1="0" x2="0" y2="1"><stop offset="0" stop-color="#aaa"/><stop offset="1" stop-color="#aaa" stop-opacity="0"/></linearGradient></defs>';
marks.forEach((m, i) => {
    const x = i * MARK_GAP;
    ruler += `<rect x="${x}" y="5" width="1" height="31" fill="url(#g-tick)"/>`;
    for (let t = 1; t < 24; t++) {
        const h = t === 12 ? 11 : t % 2 ? 4 : 8;
        ruler += `<rect x="${x + t * 6.25}" y="5" width="1.300" height="${h}" fill="${t === 12 ? "#77777b" : "#515156"}"/>`;
    }
    ruler += `<text x="${x + 3.5}" y="29.5">${m}</text>`;
});
[676, 790].forEach(x => {
    ruler += `<path transform="translate(${x} 35)" d="M1 0H12L13 1V10L6.500 14.500L0 10V1Z" fill="#0280e6"/>`;
});
document.getElementById("ruler").innerHTML = ruler + "</svg>";

/* ---------- clips ---------- */
// x, right edge, name, gain line offset, peak heights every 3px
const clips = [
    [290, 408, "CVLINE...p4 -", 26, [0,17,18,20,13,20,19,19,17,18,20,20,20,19,18,19,18,19,16,19,13,20,19,19,18,19,18,20,19,17,18,19,16,17,12,7,9,5,4,1]],
    [410, 458, "M...", 25, [18,10,13,10,11,15,24,9,13,11,14,9,20,13,6,3,0]],
    [460, 554, "MVI_9...4 -", 25, [19,15,11,17,18,13,9,19,14,10,11,8,1,16,10,13,9,13,23,9,9,6,3,2,1,20,9,16,9,10,16,12]],
    [556.5, 639, "MVI_... -", 22, [1,5,16,17,15,17,23,23,15,22,16,19,12,9,14,24,9,22,13,17,13,26,27,14,6,5,5,4]],
    [641, 693, "MV...", 22, [6,6,17,28,20,16,13,10,13,12,24,14,14,10,11,7,2]],
    [695, 728, "...", 21, [12,24,20,25,14,26,14,22,8,22,14]],
    [730, 782, "MV...", 21, [10,24,20,12,10,17,15,10,26,14,16,10,17,9,22,26,14]],
    [784, 873, "MVI_9...4 -", 22, [12,28,24,22,20,13,16,14,13,11,12,24,8,22,8,5,4,3,3,13,3,4,4,3,4,5,4,3,3,3]],
    [875, 969, "MVI_9...4 -", 22, [5,12,28,22,14,18,11,15,17,19,24,18,11,27,18,10,9,12,7,24,8,9,11,7,8,4,4,3,3,3,5,3]],
    [1086.5, 1215, "MVI_9469.MP4 -", 23, [2,18,24,15,5,4,6,10,9,6,4,15,14,15,22,12,12,16,11,15,12,10,12,10,16,13,10,12,11,10,12,10,9,26,8,3,2,2,2,2,2,2,2]],
    [1217.5, 1304, "MVI_9...4 -", 22, [28,20,18,20,14,9,5,4,10,22,13,20,15,25,14,18,13,22,12,14,11,13,11,22,12,28,26,12,5]],
    [1306.5, 1369, "MVI...-", 22, [3,14,26,14,24,15,22,13,15,17,22,12,28,15,13,20,25,14,22,11,4]],
    [1371, 1413, "M...", 22, [6,26,14,6,15,24,11,22,27,16,5,4,3,2]],
    [1415, 1464, "M...", 22, [20,20,13,17,25,10,18,10,22,6,8,4,2,4,3,1]],
    [1466, 1528, "MVI...-", 22, [4,15,26,15,22,13,10,17,15,12,27,16,10,17,24,12,15,26,10,4,2]],
    [1530, 1580, "...", 22, [5,14,22,12,24,14,25,12,17,14,20,24,18,14,10]]
];

function wave(points, mid, line) {
    const top = [], bottom = [];
    points.forEach(([x, a]) => {
        top.push(`${x.toFixed(1)} ${(mid - Math.min(27.5, a)).toFixed(1)}`);
        const d = a < 3 ? a : a * (0.9 + rnd() * 0.35);
        bottom.unshift(`${x.toFixed(1)} ${(mid + Math.min(29.5, d)).toFixed(1)}`);
    });
    return `<path d="M${top.join("L")}L${bottom.join("L")}Z" fill="#daefe4" stroke="#345a49" stroke-width="${line}" stroke-linejoin="bevel"/>`;
}

// turns the 3px peaks into a jagged outline with thin spikes over a fuller body
function outline(peaks, width, dense) {
    const pts = [];
    peaks.forEach((a, i) => {
        const x = i * 3 + 1;
        const next = peaks[i + 1] ?? a;
        const body = Math.min(a, next) * (dense ? 0.95 : 0.82 + rnd() * 0.25);
        if (!dense && a > 20) {
            pts.push([x - 0.9, a * 0.72], [x, a], [x + 0.9, a * 0.72]);
        } else {
            pts.push([x, a]);
        }
        pts.push([x + 1.6, Math.min(body, dense ? 30 : 18)]);
    });
    return pts.filter(p => p[0] < width);
}

function clipHtml(x, right, y, name, svg) {
    return `<div class="clip" style="left:${x - X0}px;top:${y}px;width:${right - x}px"><svg width="${right - x}" height="93"><path d="M0 62.500H1400" stroke="#316b4b"/>${svg}</svg><span>${name}</span></div>`;
}

let rows = '<svg width="1276" height="708">';
for (let i = 1; i < 9; i++) rows += `<path d="M${i * MARK_GAP + 0.5} 0V708" stroke="#3a3a40"/>`;
[96.5, 290.5, 484.5].forEach(y => rows += `<path d="M0 ${y}H1276" stroke="#1d1d21"/>`);
[193, 387, 581].forEach(y => rows += `<path d="M0 ${y}H1276" stroke="#141417" stroke-width="2.500"/>`);
rows += "</svg>";

["L", "R"].forEach((side, r) => {
    clips.forEach(([x, right, name, gain, peaks], i) => {
        const gap = name === "M..." ? "" : " ";
        const label = name === "..." ? name : name + gap + side;
        const svg = wave(outline(peaks, right - x, i === 0), 30.5, 1.3) + `<path d="M0 ${gain - 0.5}H${right - x}" stroke="#fff" opacity=".5" stroke-width="1.200"/>`;
        rows += clipHtml(x, right, 2 + r * 96, label, svg);
    });
});

// the two slivers on Audio 2
[196, 292].forEach(y => rows += `<div class="clip bare" style="left:892px;top:${y}px;width:7px"></div>`);

// music bed
function musicAmp(x) {
    if (x < 555) return rnd() < 0.4 ? 0.5 : 1.5 + rnd() * 2.5;
    if (x > 630 && x < 645) return 4 + rnd() * 6;
    if (x > 832 && x < 877) return 3.5 + rnd() * 2.5;
    if (x > 972 && x < 1096) return 5 + rnd() * 3.5;
    return 0.1 + rnd() * 0.9;
}
["L", "R"].forEach((side, r) => {
    const pts = [];
    for (let x = 411; x < 1566; x += 1.7) pts.push([x - 410, musicAmp(x)]);
    const svg = wave(pts, 31, 1.5)
        + '<path d="M0 36H145L148 38H218L220 31H234L235 38H420L422 33H466L467 38H560L562 32H688L690 41H1156" fill="none" stroke="#e8f5ee" opacity=".6" stroke-width="1.500"/>';
    rows += clipHtml(410, 1580, 389 + r * 96, "Randy Sharp - Gonna Be This Way.mp3 - " + side, svg);
});

/* keyframes on the gain lines */
const keys = [[555.4, 285], [584.5, 283], [622, 282], [629.6, 283], [645, 283], [663, 283], [799.5, 282], [817, 283], [831, 283], [845.5, 283], [929.6, 283],
    [555.5, 684], [557, 686.5], [628.5, 687], [629.5, 680], [644.5, 680], [644.5, 687], [830.5, 687], [832, 682], [877, 681], [877, 686.5], [970.5, 687], [972, 681],
    [1098.5, 681], [1100, 689.5], [1299, 682], [1299, 689.5], [1306.5, 682], [1306.5, 689.5], [1406, 681], [1406, 689.5], [1414, 681], [1414, 689.5], [1454, 689], [1454, 684.5], [1465.5, 682], [1467, 689.5]];
rows += '<svg width="1276" height="708">';
keys.forEach(([x, y]) => [0, 96].forEach(d => {
    rows += `<circle cx="${x - X0}" cy="${y - 259 + d}" r="5.200" fill="#fff" stroke="#4a4f4c" stroke-width="1.700"/>`;
}));
document.getElementById("rows").innerHTML = rows + "</svg>";

/* ---------- track headers ---------- */
const tracks = [["A1", "Audio 1", "20 Clips"], ["A2", "Audio 2", "2 Clips"], ["A3", "Audio 3", "1 Clip"], ["B1", "Bus 1", ""]];
document.getElementById("heads").innerHTML = tracks.map(([no, name, count], i) => {
    const bus = no === "B1";
    return `<div class="head ${bus ? "bus" : ""}"><div class="head-in">
        <div class="head-top"><span class="no">${no}</span><span class="nm">${name}</span>${i === 0 ? '<span class="fx">fx</span>' : ""}<span class="fmt">2.0</span></div>
        <div class="head-body"><div class="head-ctl">
            <div class="ctl-row"><span class="vol">0.0</span>${bus ? "" : '<svg class="lock" width="16" height="17"><use href="#lock"/></svg><span class="btn">R</span><span class="btn">S</span>'}<span class="btn">M</span></div>
            <div class="ctl-row second"><div class="select">None<svg width="12" height="8"><use href="#chev"/></svg></div><svg width="25" height="16"><use href="#curve"/></svg></div>
            <div class="count">${count}</div>
        </div><div class="strip-meter"></div></div>
    </div></div>`;
}).join("");

/* ---------- mixer channels ---------- */
function fader() {
    let s = '<svg width="82" height="251"><text class="db" x="11" y="15">0.0</text>';
    s += '<rect x="17" y="31" width="5" height="208" fill="#19191a"/><rect x="21" y="31" width="1" height="208" fill="#3c3c3f"/>';
    [[0, 31.5], [-5, 59], [-10, 85.5], [-15, 112], [-20, 138], [-30, 180.5], [-40, 213], [-50, 229.5]].forEach(([v, y]) => {
        s += `<text x="45.500" y="${y + 3.5}">${v}</text><rect x="50" y="${y}" width="2" height="1.500" fill="#77777a"/>`;
    });
    [32, 142, 170, 184, 198, 212, 219, 226, 229, 233].forEach(y => s += `<rect x="5" y="${y - 0.5}" width="5" height="1.300" fill="#55595c"/>`);
    s += '<rect x="5" y="86" width="5" height="2" fill="#fff"/>';
    s += '<g fill="none" stroke="#08080a"><rect x="55.500" y="21.500" width="22" height="3"/><path d="M66.500 21V25"/><rect x="55.500" y="31.500" width="22" height="213"/><path d="M66.500 31V245"/></g>';
    s += '<defs><linearGradient id="g-knob" x1="0" y1="0" x2="0" y2="1"><stop offset="0" stop-color="#bbb"/><stop offset=".1" stop-color="#8d8d8b"/><stop offset=".45" stop-color="#8d8d8b"/><stop offset=".5" stop-color="#999"/><stop offset="1" stop-color="#aeaeae"/></linearGradient></defs>';
    s += '<rect x="12" y="74.500" width="15" height="26.500" fill="url(#g-knob)" stroke="#101011"/><rect x="14" y="86" width="11" height="1.500" fill="#5e5e5c"/>';
    return s + "</svg>";
}

const channels = [
    { id: "A1", name: "Audio 1", input: "No Input", cls: "sel", fx: ["Noise R...", "Noise R..."], lit: true, btns: ["R", "S", "M"] },
    { id: "A2", name: "Audio 2", input: "No Input", cls: "", fx: [], btns: ["R", "S", "M"] },
    { id: "Bus1", name: "Bus 1", input: "", cls: "", fx: [], btns: ["M"], bus: true }
];
document.getElementById("channels").innerHTML = channels.map((c, i) => `
    <div class="ch ${c.bus ? "bus" : ""} ${i === 1 ? "shade" : ""}">
        <div class="bar"></div>
        <div class="cell name">${c.id}</div>
        <div class="cell c-input"><div class="box">${c.input}</div></div>
        <div class="cell c-fx">${c.bus ? "" : '<div class="box dial">Dial Lev</div>'}</div>
        <div class="cell c-order">${c.bus ? "" : '<div class="box order"><span class="a">FX</span><span class="b">DY</span><span class="c">EQ</span></div>'}</div>
        <div class="cell c-effects">${c.fx.map(f => `<div class="box noise">${f}</div>`).join("")}<div class="box plus">+</div></div>
        <div class="cell c-in"><div class="btn in ${c.lit ? "lit" : ""}">In</div></div>
        <div class="cell c-dyn"><svg width="72" height="71"><rect x="0.500" y="0.500" width="70" height="70" rx="3" fill="#27262b" stroke="#0f0f11"/><path d="M35.500 1V70M1 35.500H70" stroke="#37373c"/><path d="M2 68L68 2" stroke="#76861f" stroke-width="1.800"/></svg></div>
        <div class="cell c-eq"><svg width="72" height="32"><path d="M0.500 32V3Q0.500 0.500 3 0.500H68Q70.500 0.500 70.500 3V32" fill="none" stroke="#0f0f11"/><path d="M35.500 1V32" stroke="#303035"/><path d="M1 17.500H70" stroke="#28828c" stroke-width="1.800"/></svg></div>
        <div class="cell foot ${c.cls}">${c.name}</div>
        <div class="cell c-btns">${c.btns.map(b => `<span class="btn">${b}</span>`).join("")}</div>
        <div class="cell c-auto"><svg width="25" height="16"><use href="#curve"/></svg></div>
        ${fader()}
        ${i === 0 ? '<i class="mix-scroll"></i>' : ""}
    </div>`).join("");
```
